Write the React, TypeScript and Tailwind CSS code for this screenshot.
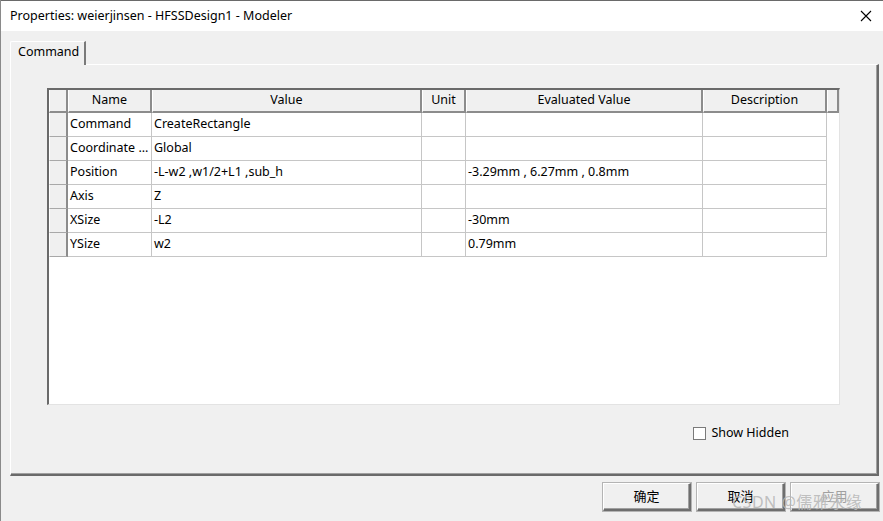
import React from 'react';

type Row = { name: string; value: string; unit: string; evaluated: string; description: string };

const rows: Row[] = [
  { name: 'Command', value: 'CreateRectangle', unit: '', evaluated: '', description: '' },
  { name: 'Coordinate ...', value: 'Global', unit: '', evaluated: '', description: '' },
  { name: 'Position', value: '-L-w2 ,w1/2+L1 ,sub_h', unit: '', evaluated: '-3.29mm , 6.27mm , 0.8mm', description: '' },
  { name: 'Axis', value: 'Z', unit: '', evaluated: '', description: '' },
  { name: 'XSize', value: '-L2', unit: '', evaluated: '-30mm', description: '' },
  { name: 'YSize', value: 'w2', unit: '', evaluated: '0.79mm', description: '' },
];

const cols = 'grid grid-cols-[19px_84px_270px_44px_237px_124px_12px]';

const HeaderCell: React.FC<{ label?: string }> = ({ label }) => (
  <div className="h-[23px] bg-[#f0f0f0] border-l border-white border-r-2 border-b-2 border-r-[#8c8c8c] border-b-[#8c8c8c] flex items-center justify-center text-[12.5px] text-black">
    {label}
  </div>
);

const DataCell: React.FC<{ text: string }> = ({ text }) => (
  <div className="h-[24px] bg-white border-r border-b border-[#c6c6c6] flex items-center pl-[2px] text-[12.5px] text-black whitespace-nowrap overflow-hidden">
    {text}
  </div>
);

const DialogButton: React.FC<{ label: string; disabled?: boolean }> = ({ label, disabled }) => (
  <button
    className={`w-[88px] h-[28px] bg-[#f0f0f0] border-t border-l border-white border-r-2 border-b-2 border-r-[#6e6e6e] border-b-[#6e6e6e] shadow-[inset_-1px_-1px_0_#a0a0a0,0_0_0_1px_#b4b4b4] text-[13px] ${disabled ? 'text-[#a0a0a0]' : 'text-black'}`}
  >
    {label}
  </button>
);

export default function App() {
  return (
    <div
      className="relative w-[883px] h-[521px] bg-[#f0f0f0] overflow-hidden border-l border-[#8a8a8a]"
      style={{ fontFamily: '"Noto Sans", "Noto Sans CJK SC", sans-serif' }}
    >
      {/* title bar */}
      <div className="h-[31px] bg-white border-t border-[#6a6a6a] flex items-center justify-between pl-[9px] pr-[9px]">
        <span className="text-[12.5px] text-black">Properties: weierjinsen - HFSSDesign1 - Modeler</span>
        <svg width="12" height="12" viewBox="0 0 12 12" className="mr-[2px]">
          <path d="M1 1 L11 11 M11 1 L1 11" stroke="#000" strokeWidth="1.1" />
        </svg>
      </div>

      <div className="pl-[9px] pr-[4px] pt-[10px]">
        {/* tab */}
        <div className="relative z-10 w-[76px] h-[24px] bg-[#f0f0f0] border-t border-l border-white border-r-2 border-r-[#7a7a7a] rounded-tl-[2px] flex items-center pl-[7px] pb-[2px] text-[12.5px] text-black mb-[-1px]">
          Command
        </div>

        {/* tab panel */}
        <div className="h-[412px] border-t border-l border-white border-r-2 border-b-2 border-r-[#6a6a6a] border-b-[#6a6a6a] shadow-[inset_-1px_-1px_0_#a0a0a0] pl-[36px] pt-[23px]">
          <div className="w-[793px] h-[317px] bg-white border-t-2 border-l-2 border-[#6a6a6a] border-r border-b border-r-[#e3e3e3] border-b-[#e3e3e3]">
            <div className={cols}>
              <HeaderCell />
              <HeaderCell label="Name" />
              <HeaderCell label="Value" />
              <HeaderCell label="Unit" />
              <HeaderCell label="Evaluated Value" />
              <HeaderCell label="Description" />
              <HeaderCell />
            </div>
            {rows.map((r) => (
              <div key={r.name} className={cols}>
                <div className="h-[24px] bg-[#f0f0f0] border-l border-white border-r-2 border-r-[#8c8c8c] border-b border-b-[#a8a8a8]" />
                <DataCell text={r.name} />
                <DataCell text={r.value} />
                <DataCell text={r.unit} />
                <DataCell text={r.evaluated} />
                <DataCell text={r.description} />
                <div className="h-[24px] bg-white" />
              </div>
            ))}
          </div>

          <div className="flex justify-end pr-[88px] mt-[19px]">
            <label className="flex items-center gap-[5px] text-[12.5px] text-black">
              <span className="w-[13px] h-[13px] bg-white border border-[#7a7a7a]" />
              Show Hidden
            </label>
          </div>
        </div>

        {/* buttons */}
        <div className="flex justify-end gap-[6px] pr-0 mt-[7px]">
          <DialogButton label="确定" />
          <DialogButton label="取消" />
          <DialogButton label="应用" disabled />
        </div>
      </div>

      {/* watermark */}
      <div className="absolute left-[731px] top-[490px] text-[16px] text-[#b8b8b8]/90 pointer-events-none tracking-[0.5px]">
        CSDN @儒雅永缘
      </div>
    </div>
  );
}
